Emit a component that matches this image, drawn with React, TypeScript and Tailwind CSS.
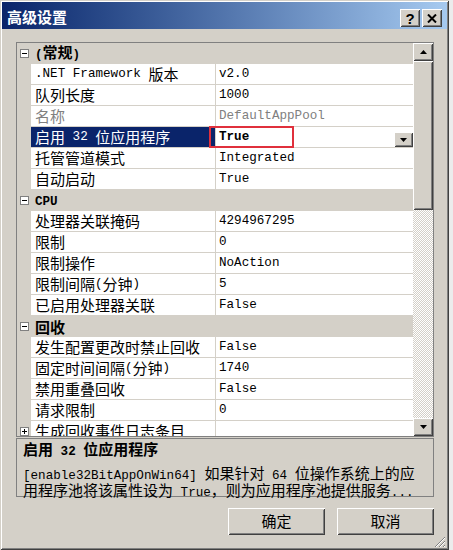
import React from "react";

const CJK_SPLIT = /([\u2E80-\u9FFF\u3000-\u303F\uFF00-\uFFEF]+)/;
const CJK_TEST = /[\u2E80-\u9FFF\u3000-\u303F\uFF00-\uFFEF]/;

// SimSun-like mix: half-width mono latin, full-width CJK
function Txt({ s }: { s: string }) {
  return (
    <>
      {s
        .split(CJK_SPLIT)
        .filter(Boolean)
        .map((p, i) =>
          CJK_TEST.test(p) ? (
            <span key={i} className="font-['Noto_Sans_CJK_SC',sans-serif] text-[15px]">
              {p}
            </span>
          ) : (
            <span key={i} className="font-['Liberation_Mono',monospace] text-[12.6px] whitespace-pre">
              {p}
            </span>
          )
        )}
    </>
  );
}

const raised =
  "bg-[#d4d0c8] shadow-[inset_1px_1px_0_#ffffff,inset_-1px_-1px_0_#404040,inset_2px_2px_0_#d4d0c8,inset_-2px_-2px_0_#808080]";

type Row =
  | { cat: string }
  | { n: string; v: string; gray?: boolean; sel?: boolean; sub?: boolean };

const rows: Row[] = [
  { cat: "(常规)" },
  { n: ".NET Framework 版本", v: "v2.0" },
  { n: "队列长度", v: "1000" },
  { n: "名称", v: "DefaultAppPool", gray: true },
  { n: "启用 32 位应用程序", v: "True", sel: true },
  { n: "托管管道模式", v: "Integrated" },
  { n: "自动启动", v: "True" },
  { cat: "CPU" },
  { n: "处理器关联掩码", v: "4294967295" },
  { n: "限制", v: "0" },
  { n: "限制操作", v: "NoAction" },
  { n: "限制间隔(分钟)", v: "5" },
  { n: "已启用处理器关联", v: "False" },
  { cat: "回收" },
  { n: "发生配置更改时禁止回收", v: "False" },
  { n: "固定时间间隔(分钟)", v: "1740" },
  { n: "禁用重叠回收", v: "False" },
  { n: "请求限制", v: "0" },
  { n: "生成回收事件日志条目", v: "", sub: true },
];

function ToggleBox({ plus }: { plus?: boolean }) {
  return (
    <svg width="9" height="9" viewBox="0 0 9 9">
      <rect x="0.5" y="0.5" width="8" height="8" fill="#ffffff" stroke="#808080" />
      <path d="M2 4.5h5" stroke="#000" />
      {plus && <path d="M4.5 2v5" stroke="#000" />}
    </svg>
  );
}

function Arrow({ up }: { up?: boolean }) {
  return (
    <svg width="7" height="4" viewBox="0 0 7 4">
      <path d={up ? "M3.5 0L7 4H0z" : "M0 0h7L3.5 4z"} fill="#000" />
    </svg>
  );
}

function GridRow({ r }: { r: Row }) {
  if ("cat" in r) {
    return (
      <div className="flex h-[21px] shrink-0 items-center bg-[#d4d0c8]">
        <div className="flex w-[14px] shrink-0 items-center pl-[3px]">
          <ToggleBox />
        </div>
        <div className="pl-[4px] font-bold leading-[20px] text-black">
          <Txt s={r.cat} />
        </div>
      </div>
    );
  }
  return (
    <div className="relative flex h-[21px] shrink-0">
      <div className="flex w-[14px] shrink-0 items-center bg-[#d4d0c8] pl-[3px]">
        {r.sub && <ToggleBox plus />}
      </div>
      <div
        className={`flex w-[184px] shrink-0 items-center border-b border-[#d4d0c8] pl-[4px] leading-[20px] whitespace-nowrap ${
          r.sel ? "bg-[#0a246a] text-white" : r.gray ? "bg-white text-[#808080]" : "bg-white text-black"
        }`}
      >
        <Txt s={r.n} />
      </div>
      <div className="w-[1px] shrink-0 bg-[#d4d0c8]" />
      <div
        className={`flex flex-1 items-center border-b border-[#d4d0c8] bg-white pl-[3px] leading-[20px] ${
          r.gray ? "text-[#808080]" : "text-black"
        } ${r.sel ? "font-bold" : ""}`}
      >
        <Txt s={r.v} />
        {r.sel && (
          <div className={`ml-auto flex h-[15px] w-[19px] items-center justify-center self-end ${raised}`}>
            <Arrow />
          </div>
        )}
      </div>
      {r.sel && (
        <div className="absolute left-[192px] top-[-1px] h-[22px] w-[85px] border-2 border-[#e0303c]" />
      )}
    </div>
  );
}

export default function App() {
  return (
    <div className="flex h-[550px] w-[453px] overflow-hidden bg-[#ececec]">
      <div className="relative flex h-[550px] w-[449px] shrink-0 flex-col bg-[#d4d0c8] p-[2px] shadow-[inset_1px_1px_0_#d4d0c8,inset_-1px_-1px_0_#404040,inset_2px_2px_0_#ffffff,inset_-2px_-2px_0_#808080]">
        {/* Title bar */}
        <div className="flex h-[27px] shrink-0 items-center bg-gradient-to-r from-[#0a246a] to-[#a6caf0] pl-[5px] pr-[5px]">
          <div className="mt-[2px] font-['Noto_Sans_CJK_SC',sans-serif] text-[15px] font-bold leading-[20px] text-white">
            高级设置
          </div>
          <div className="ml-auto mt-[5px] flex gap-[2px]">
            <div className={`flex h-[18px] w-[20px] items-center justify-center ${raised}`}>
              <span className="font-['Liberation_Sans',sans-serif] text-[15px] font-bold leading-none text-black">
                ?
              </span>
            </div>
            <div className={`flex h-[18px] w-[20px] items-center justify-center ${raised}`}>
              <svg width="10" height="9" viewBox="0 0 10 9">
                <path d="M1 0.5L9 8.5M9 0.5L1 8.5" stroke="#000" strokeWidth="2" />
              </svg>
            </div>
          </div>
        </div>

        <div className="mt-[13px] flex flex-col pl-[14px] pr-[13px]">
          {/* Property grid */}
          <div className="flex h-[395px] border border-[#808080] bg-[#d4d0c8]">
            <div className="flex w-[396px] flex-col overflow-hidden">
              {rows.map((r, i) => (
                <GridRow key={i} r={r} />
              ))}
            </div>
            <div className="flex w-[20px] flex-col">
              <div className={`flex h-[18px] shrink-0 items-center justify-center ${raised}`}>
                <Arrow up />
              </div>
              <div className={`h-[149px] shrink-0 ${raised}`} />
              <div className="flex-1 bg-[image:repeating-conic-gradient(#ffffff_0_25%,#d4d0c8_0_50%)] bg-[length:2px_2px]" />
              <div className={`flex h-[18px] shrink-0 items-center justify-center ${raised}`}>
                <Arrow />
              </div>
            </div>
          </div>

          {/* Description */}
          <div className="mt-[1px] h-[59px] border border-[#808080] px-[6px] pt-[1px] text-black">
            <div className="font-bold leading-[18px] whitespace-nowrap">
              <Txt s="启用 32 位应用程序" />
            </div>
            <div className="mt-[5px] leading-[14px] whitespace-nowrap">
              <div>
                <Txt s="[enable32BitAppOnWin64] 如果针对 64 位操作系统上的应" />
              </div>
              <div>
                <Txt s="用程序池将该属性设为 True，则为应用程序池提供服务..." />
              </div>
            </div>
          </div>

          {/* Buttons */}
          <div className="mt-[11px] flex justify-end gap-[12px]">
            <div className={`flex h-[27px] w-[97px] items-center justify-center text-black ${raised}`}>
              <Txt s="确定" />
            </div>
            <div className={`flex h-[27px] w-[97px] items-center justify-center text-black ${raised}`}>
              <Txt s="取消" />
            </div>
          </div>
        </div>

        {/* Resize grip */}
        <svg className="absolute bottom-[2px] right-[3px]" width="12" height="12" viewBox="0 0 12 12">
          <path d="M11 1L1 11M11 5L5 11M11 9L9 11" stroke="#808080" />
          <path d="M11 2L2 11M11 6L6 11M11 10L10 11" stroke="#ffffff" />
        </svg>
      </div>
    </div>
  );
}
